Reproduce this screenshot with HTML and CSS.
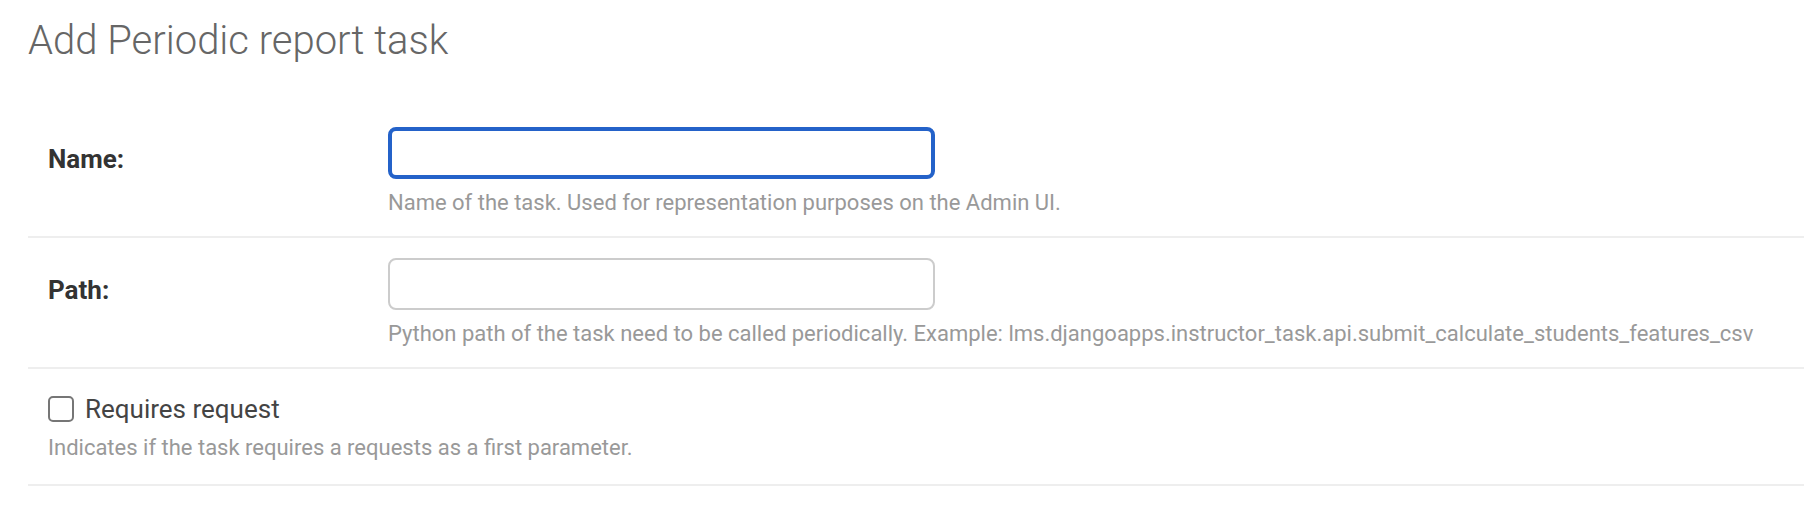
FILE: index.html
```html
<!DOCTYPE html>
<html lang="en">
<head>
<meta charset="utf-8">
<title>Add Periodic report task</title>
<link rel="stylesheet" href="styles.css">
</head>
<body>
<div class="content">
  <h1 class="page-title">Add Periodic report task</h1>
  <form class="task-form">
    <fieldset class="module aligned">
      <div class="form-row">
        <div class="field">
          <label class="required" for="id_name">Name:</label>
          <input type="text" id="id_name" class="text-input is-focused">
        </div>
        <div class="help help-indented">Name of the task. Used for representation purposes on the Admin UI.</div>
      </div>
      <div class="form-row">
        <div class="field">
          <label class="required" for="id_path">Path:</label>
          <input type="text" id="id_path" class="text-input">
        </div>
        <div class="help help-indented">Python path of the task need to be called periodically. Example: lms.djangoapps.instructor_task.api.submit_calculate_students_features_csv</div>
      </div>
      <div class="form-row form-row-checkbox">
        <div class="checkbox-row">
          <input type="checkbox" id="id_requires_request" class="checkbox">
          <label class="checkbox-label" for="id_requires_request">Requires request</label>
        </div>
        <div class="help help-checkbox">Indicates if the task requires a requests as a first parameter.</div>
      </div>
    </fieldset>
  </form>
</div>
</body>
</html>
```

FILE: styles.css
```css
html, body {
  margin: 0;
  padding: 0;
  background: #fff;
}

body {
  font-family: Roboto, "Liberation Sans", Arial, sans-serif;
  color: #333;
}

.content {
  padding: 17px 0 0 28px;
}

.page-title {
  margin: 0 0 42px;
  font-size: 40px;
  line-height: 48px;
  font-weight: 300;
  color: #666;
}

.task-form {
  margin: 0;
}

.module {
  margin: 0;
  padding: 0;
  border: 0;
  min-width: 0;
}

.form-row {
  padding: 20px;
  border-bottom: 2px solid #eeeeee;
}

.field {
  display: flex;
  align-items: center;
}

.field label {
  flex: 0 0 320px;
  padding: 12px 20px 0 0;
  font-size: 26px;
  font-weight: 700;
  color: #333;
}

.text-input {
  box-sizing: border-box;
  width: 547px;
  height: 52px;
  margin: 0;
  padding: 10px 12px;
  border: 2px solid #cccccc;
  border-radius: 8px;
  font-family: inherit;
  font-size: 26px;
  background: #fff;
  outline: none;
}

.text-input.is-focused {
  border: 4px solid #2462c9;
}

.help {
  font-size: 22px;
  line-height: 26px;
  color: #999;
  white-space: nowrap;
}

.help-indented {
  margin: 11px 0 0 340px;
}

.form-row-checkbox {
  padding-bottom: 23px;
}

.checkbox-row {
  display: flex;
  align-items: center;
  height: 40px;
}

.checkbox {
  appearance: none;
  -webkit-appearance: none;
  box-sizing: border-box;
  width: 26px;
  height: 26px;
  margin: 0 11px 0 0;
  border: 2px solid #767676;
  border-radius: 5px;
  background: #fff;
}

.checkbox-label {
  font-size: 26px;
  color: #444;
}

.help-checkbox {
  margin-top: 6px;
}
```
